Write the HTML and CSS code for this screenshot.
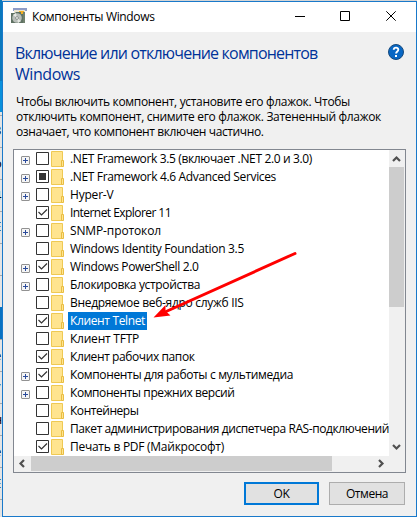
FILE: index.html
```html
<!DOCTYPE html>
<html lang="ru">
<head>
<meta charset="utf-8">
<title>Компоненты Windows</title>
<link rel="stylesheet" href="styles.css">
</head>
<body>
<div class="desktop">
  <div class="behind">
    <i class="mark m1">3</i><i class="mark m2">о</i><i class="mark m3">4</i><i class="mark m4">Е</i><i class="mark m5">е</i><i class="mark m6">у</i><i class="mark m7">н</i><i class="mark m8">е</i><i class="mark m9">Е</i>
  </div>
  <main class="window">
    <header class="titlebar">
      <svg class="app-icon" width="16" height="16" viewBox="0 0 16 16">
        <path d="M2 0h14v3H2z" fill="#8e9cc7"/><path d="M3 2h11v12H3z" fill="#e8e3cf"/>
        <path d="M8 3h5v5H8z" fill="#f0ae25"/><path d="M12 4h2v11h-2z" fill="#71816f"/>
        <path d="M0 5h4l1-1h5v2h2v9H0z" fill="#5f7263"/>
        <circle cx="6" cy="10" r="4.800" fill="#b9beb9"/><path d="M6 10 2 7l3-2zM6 10l4 3-3 2z" fill="#e6e9e4"/>
        <circle cx="6" cy="10" r="1.400" fill="#fff" stroke="#788078" stroke-width=".8"/>
      </svg>
      <span class="title" data-w="122.500">Компоненты Windows</span>
      <svg class="controls" width="104" height="12" viewBox="0 0 104 12" fill="none" stroke="#000">
        <path d="M0 6.500h10M45.500 1.500h9v9h-9z"/><path d="m91.300 1.300 9.400 9.400m0-9.400-9.400 9.400"/>
      </svg>
    </header>
    <section class="intro">
      <h1><span data-w="302.500">Включение или отключение компонентов</span><br><span data-w="65">Windows</span></h1>
      <svg class="help" width="16" height="16" viewBox="0 0 16 16">
        <circle cx="8" cy="8" r="7.500" fill="#0867c4" stroke="#174a7d"/>
        <path d="M5.700 5.800C5.900 2.900 10.400 3 10.300 5.700 10.200 7.500 8.100 7.400 8.100 9.500" fill="none" stroke="#fff" stroke-width="1.900"/><path d="M7 11h2v2H7z" fill="#fff"/>
      </svg>
    </section>
    <p class="description"><span data-w="334">Чтобы включить компонент, установите его флажок. Чтобы</span><br><span data-w="365">отключить компонент, снимите его флажок. Затененный флажок</span><br><span data-w="247.500">означает, что компонент включен частично.</span></p>
    <section class="listbox">
      <div class="rows" id="rows"></div>
      <div class="vscroll"><svg width="15" height="17" viewBox="0 0 15 17"><path d="m4 11 3.500-3.500L11 11" /></svg><div class="vthumb"></div><svg width="15" height="17" viewBox="0 0 15 17"><path d="m4 6 3.500 3.500L11 6"/></svg></div>
      <div class="hscroll"><svg width="17" height="15" viewBox="0 0 17 15"><path d="M10 4 6.500 7.500 10 11"/></svg><div class="hthumb"></div><svg width="17" height="15" viewBox="0 0 17 15"><path d="m7 4 3.500 3.500L7 11"/></svg></div>
    </section>
    <footer class="actions"><button class="primary"><span data-w="16">OK</span></button><button><span data-w="42">Отмена</span></button></footer>
  </main>
  <svg class="arrow" width="417" height="517" viewBox="0 0 417 517"><path d="M295 253.500 165 312" stroke="#f00" stroke-width="3" stroke-linecap="round"/><path d="m153.500 317.500 12-12.500v6l5 4.500z" fill="#f00"/></svg>
</div>
<script src="rows.js"></script>
</body>
</html>
```
FILE: styles.css
```css
* { box-sizing: border-box; }
body { margin: 0; width: 417px; height: 517px; overflow: hidden; color: #000; font: 12px/15px "Open Sans", "Noto Sans", sans-serif; }
.desktop { position: relative; width: 417px; height: 517px; padding: 1px 0 0 2px; background: #d5d5d5; }
.behind { position: absolute; left: 0; top: 0; width: 2px; height: 517px; overflow: hidden; background: linear-gradient(#0b79bd 0 81px, #0a91dc 81px 112px, transparent 112px 307px, #0872c2 307px 339px, transparent 339px), repeating-linear-gradient(#e4e4e4 0 19px, #a8a8a8 19px 20px, #e4e4e4 20px 32px); }
.mark { position: absolute; left: -6px; font: 13px/16px "Open Sans", sans-serif; }
.m1 { top: 122px; } .m2 { top: 155px; } .m3 { top: 187px; } .m4 { top: 218px; } .m5 { top: 347px; } .m6 { top: 378px; } .m7 { top: 411px; } .m8 { top: 443px; } .m9 { top: 475px; }
.window { position: relative; width: 415px; height: 516px; border: 1px solid #1979ca; background: #f0f0f0; overflow: hidden; }
.titlebar { display: flex; height: 30px; padding: 6px 17px 0 8px; background: #fff; }
.title { margin: 1px 0 0 5px; }
.controls { margin: 2px 0 0 auto; }
[data-w] { display: inline-block; white-space: pre; }
.intro { display: flex; justify-content: space-between; padding: 11px 12px 0 12px; height: 59px; }
h1 { margin: 0; color: #003399; font: 16px/21px "Open Sans", "Noto Sans", sans-serif; }
.help { margin-top: 1px; }
.description { margin: 3px 0 0 13px; height: 55px; white-space: nowrap; }
.listbox { display: grid; grid-template: 306px 15px / 375px 15px; width: 393px; height: 324px; margin-left: 10px; border: 1px solid #828790; background: #f0f0f0; }
.rows { overflow: hidden; background: #fff; }
.row { display: flex; align-items: center; height: 18px; white-space: nowrap; }
.expand { width: 9px; height: 9px; margin: 3px 6px 0 7px; flex: none; }
.check { width: 13px; height: 13px; margin-bottom: 1px; flex: none; }
.folder { width: 13px; height: 16px; margin: 0 4px 0 2px; flex: none; }
.label { height: 18px; padding: 0 2px; line-height: 17px; flex: none; }
.selected .label { background: #0078d7; color: #fff; }
.vscroll { display: flex; flex-direction: column; }
.vthumb { height: 140px; background: #cdcdcd; margin-bottom: auto; }
.hscroll { grid-column: 1 / 3; display: flex; width: 375px; }
.hthumb { width: 301px; background: #cdcdcd; margin-right: auto; }
.vscroll path, .hscroll path { fill: none; stroke: #505050; stroke-width: 2.2; }
.actions { display: flex; gap: 10px; margin: 9px 0 0 241px; }
button { width: 76px; height: 23px; padding: 0; border: 1px solid #adadad; background: #e1e1e1; font: 12px/17px "Open Sans", "Noto Sans", sans-serif; color: #000; }
.primary { width: 75px; border: 2px solid #0078d7; }
.arrow { position: absolute; left: 0; top: 0; }
```
FILE: rows.js
```js
// [label, width, expandable, state]
const features = [
  [".NET Framework 3.5 (включает .NET 2.0 и 3.0)", 242, 1, ""],
  [".NET Framework 4.6 Advanced Services", 206, 1, "partial"],
  ["Hyper-V", 43.5, 1, ""],
  ["Internet Explorer 11", 101, 0, "on"],
  ["SNMP-протокол", 91, 1, ""],
  ["Windows Identity Foundation 3.5", 174, 0, ""],
  ["Windows PowerShell 2.0", 128.5, 1, "on"],
  ["Блокировка устройства", 130, 1, ""],
  ["Внедряемое веб-ядро служб IIS", 173.5, 0, ""],
  ["Клиент Telnet", 75, 0, "on"],
  ["Клиент TFTP", 69, 0, ""],
  ["Клиент рабочих папок", 124.5, 0, "on"],
  ["Компоненты для работы с мультимедиа", 223, 1, "on"],
  ["Компоненты прежних версий", 164.5, 1, ""],
  ["Контейнеры", 68.5, 0, ""],
  ["Пакет администрирования диспетчера RAS-подключений", 319, 0, ""],
  ["Печать в PDF (Майкрософт)", 154, 0, "on"]
];
const marks = {
  "": "",
  on: '<path d="m2.500 6 3 3 5.500-5.500" fill="none" stroke="#333" stroke-width="1.200"/>',
  partial: '<path d="M3 3h7v7H3z" fill="#333"/>'
};
document.getElementById("rows").innerHTML = features.map(([text, w, expandable, state]) => `
<div class="row${text === "Клиент Telnet" ? " selected" : ""}">
<svg class="expand" viewBox="0 0 9 9">${expandable ? '<rect x=".5" y=".5" width="8" height="8" rx=".5" fill="#f5f5f5" stroke="#929292"/><path d="M2 4.500h5M4.500 2v5" stroke="#2b4b9b"/>' : ""}</svg>
<svg class="check" viewBox="0 0 13 13"><path d="M.5.5h12v12H.5z" fill="#fff" stroke="#333"/>${marks[state]}</svg>
<svg class="folder" viewBox="0 0 13 16"><path d="M.5.5h11v15H.5z" fill="#ffe48f" stroke="#efc953"/><path d="M10.500 9.500h2v6h-2z" fill="#ffe48f" stroke="#e9bd42"/></svg>
<span class="label"><span data-w="${w}">${text}</span></span>
</div>`).join("");

// Spread each label over its nominal width
document.querySelectorAll("[data-w]").forEach(el => {
  const extra = (Number(el.dataset.w) - el.getBoundingClientRect().width) / el.textContent.length;
  el.style.letterSpacing = extra + "px";
});
```
